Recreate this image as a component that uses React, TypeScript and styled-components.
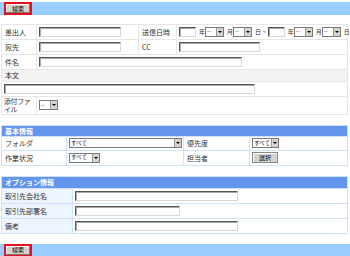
import React from "react";
import styled, { createGlobalStyle } from "styled-components";

const GlobalStyle = createGlobalStyle`
  html, body {
    margin: 0;
    padding: 0;
    background: #ffffff;
  }
  body {
    font-family: "Noto Sans CJK JP", "Noto Sans", sans-serif;
    font-size: 7px;
    color: #333;
  }
`;

const Page = styled.div`
  width: 350px;
  height: 256px;
  padding-top: 2px;
  box-sizing: border-box;
  overflow: hidden;
`;

const ActionBar = styled.div<{ $top?: number }>`
  height: 13px;
  margin-top: ${(p) => p.$top ?? 0}px;
  background: #99ccff;
  display: flex;
  align-items: center;
  padding-left: 4px;
`;

const SearchButton = styled.div`
  width: 24px;
  height: 9px;
  border: 2px solid #e8101c;
  background: #d6d3ce;
  box-shadow: inset -1px -1px 0 #777, inset 1px 1px 0 #fff;
  display: flex;
  align-items: center;
  justify-content: center;
  font-size: 6px;
  line-height: 1;
  color: #000;
`;

const FormTable = styled.table<{ $top: number; $line: string }>`
  border-collapse: collapse;
  table-layout: fixed;
  width: 347px;
  margin: ${(p) => p.$top}px 0 0 1px;
  td, th {
    border: 1px solid ${(p) => p.$line};
    padding: 0 0 0 3px;
    vertical-align: middle;
    white-space: nowrap;
    line-height: 1.15;
  }
`;

const Row = styled.tr<{ $h: number }>`
  height: ${(p) => p.$h}px;
`;

const Label = styled.td<{ $bg?: string }>`
  background: ${(p) => p.$bg ?? "#ffffff"};
  color: #333;
`;

const Value = styled.td`
  background: #ffffff;
  padding-left: 2px !important;
`;

const GrayRow = styled.td`
  background: #f3f3f3;
`;

const WrapLabel = styled(Label)`
  white-space: normal !important;
  word-break: break-all;
  letter-spacing: -0.4px;
  line-height: 1.2 !important;
  padding-left: 2px !important;
`;

const HeaderCell = styled.th`
  background: #6495ed;
  color: #ffffff;
  font-weight: bold;
  text-align: left;
  font-size: 7px;
`;

const TextBox = styled.div<{ $w: number }>`
  display: inline-block;
  vertical-align: middle;
  width: ${(p) => p.$w}px;
  height: 8px;
  background: #fff;
  border-top: 1px solid #555;
  border-left: 1px solid #555;
  border-right: 1px solid #d8d8d8;
  border-bottom: 1px solid #d8d8d8;
  box-shadow: inset 1px 1px 0 #aaa;
`;

const SelectBox = styled.div<{ $w: number }>`
  display: inline-flex;
  vertical-align: middle;
  align-items: center;
  justify-content: space-between;
  width: ${(p) => p.$w}px;
  height: 8px;
  background: #fff;
  border: 1px solid #7a7a7a;
  box-sizing: content-box;
  font-size: 5.5px;
  line-height: 1;
  color: #222;
  padding-left: 1px;
`;

const Arrow = styled.span`
  width: 6px;
  height: 8px;
  background: #d6d3ce;
  border-left: 1px solid #999;
  display: flex;
  align-items: center;
  justify-content: center;
  &::after {
    content: "";
    border-left: 2px solid transparent;
    border-right: 2px solid transparent;
    border-top: 2px solid #000;
  }
`;

const Unit = styled.span<{ $r?: number }>`
  display: inline-block;
  vertical-align: middle;
  margin: 0 ${(p) => p.$r ?? 0}px 0 3px;
  font-size: 6px;
`;

const SmallButton = styled.div`
  display: inline-flex;
  vertical-align: middle;
  align-items: center;
  justify-content: center;
  width: 24px;
  height: 9px;
  background: #d6d3ce;
  border: 1px solid #888;
  box-shadow: inset 1px 1px 0 #fff;
  font-size: 6px;
  line-height: 1;
  color: #000;
`;

const Select = ({ w, text = "--" }: { w: number; text?: string }) => (
  <SelectBox $w={w}>
    <span>{text}</span>
    <Arrow />
  </SelectBox>
);

const DateRange = () => (
  <>
    <TextBox $w={15} />
    <Unit>年</Unit>
    <Select w={16} />
    <Unit>月</Unit>
    <Select w={16} />
    <Unit $r={2}>日 ~</Unit>
    <TextBox $w={15} />
    <Unit>年</Unit>
    <Select w={16} />
    <Unit>月</Unit>
    <Select w={16} />
    <Unit>日</Unit>
  </>
);

const SECTION_LINE = "#cfe1fb";
const SECTION_LABEL = "#eef5ff";

export default function App() {
  return (
    <Page>
      <GlobalStyle />
      <ActionBar>
        <SearchButton>検索</SearchButton>
      </ActionBar>

      <FormTable $top={9} $line="#e6e6e6">
        <colgroup>
          <col style={{ width: 35 }} />
          <col style={{ width: 102 }} />
          <col style={{ width: 38 }} />
          <col />
        </colgroup>
        <tbody>
          <Row $h={15}>
            <Label>差出人</Label>
            <Value><TextBox $w={80} /></Value>
            <Label>送信日時</Label>
            <Value><DateRange /></Value>
          </Row>
          <Row $h={15}>
            <Label>宛先</Label>
            <Value><TextBox $w={80} /></Value>
            <Label>CC</Label>
            <Value><TextBox $w={79} /></Value>
          </Row>
          <Row $h={15}>
            <Label>件名</Label>
            <Value colSpan={3}><TextBox $w={201} /></Value>
          </Row>
          <Row $h={12}>
            <GrayRow colSpan={4}>本文</GrayRow>
          </Row>
          <Row $h={15}>
            <Value colSpan={4} style={{ paddingLeft: 4 }}><TextBox $w={249} /></Value>
          </Row>
          <Row $h={17}>
            <WrapLabel>添付ファイル</WrapLabel>
            <Value colSpan={3}><Select w={16} /></Value>
          </Row>
        </tbody>
      </FormTable>

      <FormTable $top={10} $line={SECTION_LINE}>
        <colgroup>
          <col style={{ width: 65 }} />
          <col style={{ width: 117 }} />
          <col style={{ width: 66 }} />
          <col />
        </colgroup>
        <tbody>
          <Row $h={11}>
            <HeaderCell colSpan={4}>基本情報</HeaderCell>
          </Row>
          <Row $h={14}>
            <Label>フォルダ</Label>
            <Value><Select w={110} text="すべて" /></Value>
            <Label>優先度</Label>
            <Value><Select w={24} text="すべて" /></Value>
          </Row>
          <Row $h={15}>
            <Label>作業状況</Label>
            <Value><Select w={28} text="すべて" /></Value>
            <Label>担当者</Label>
            <Value><SmallButton>選択</SmallButton></Value>
          </Row>
        </tbody>
      </FormTable>

      <FormTable $top={10} $line={SECTION_LINE}>
        <colgroup>
          <col style={{ width: 71 }} />
          <col />
        </colgroup>
        <tbody>
          <Row $h={12}>
            <HeaderCell colSpan={2}>オプション情報</HeaderCell>
          </Row>
          <Row $h={15}>
            <Label $bg={SECTION_LABEL}>取引先会社名</Label>
            <Value><TextBox $w={161} /></Value>
          </Row>
          <Row $h={15}>
            <Label $bg={SECTION_LABEL}>取引先部署名</Label>
            <Value><TextBox $w={103} /></Value>
          </Row>
          <Row $h={15}>
            <Label $bg={SECTION_LABEL}>備考</Label>
            <Value><TextBox $w={161} /></Value>
          </Row>
        </tbody>
      </FormTable>

      <ActionBar $top={10}>
        <SearchButton>検索</SearchButton>
      </ActionBar>
    </Page>
  );
}
